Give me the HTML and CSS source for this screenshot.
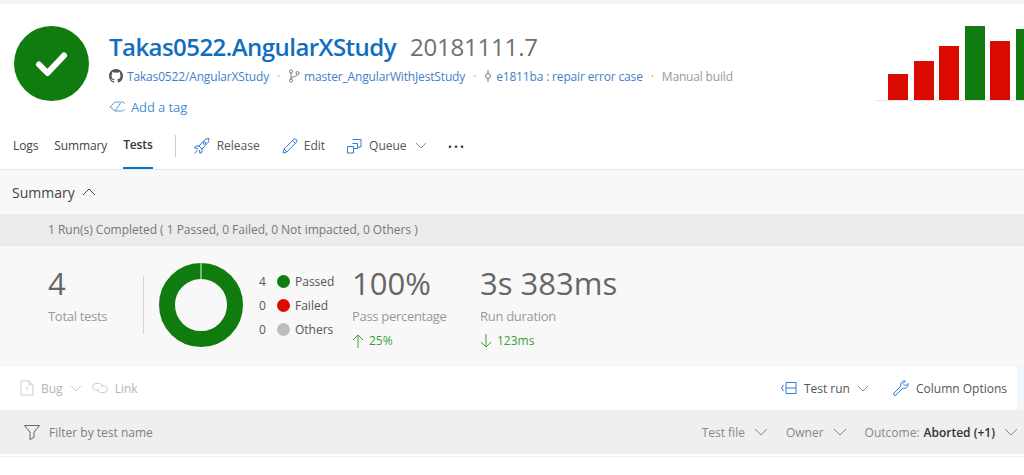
FILE: index.html
```html
<!DOCTYPE html>
<html lang="en">
<head>
  <meta charset="UTF-8">
  <title>Takas0522.AngularXStudy 20181111.7</title>
  <link rel="stylesheet" href="styles.css">
</head>
<body>
<div class="header">
  <div class="status-icon">
    <svg width="34" height="28" viewBox="0 0 34 28"><path d="M4 14.500L12.500 23L29 5.500" fill="none" stroke="#fff" stroke-width="6" stroke-linecap="round" stroke-linejoin="round"/></svg>
  </div>
  <div class="title-block">
    <div class="title"><span class="title-name">Takas0522.AngularXStudy</span><span class="title-num">20181111.7</span></div>
    <div class="meta">
      <svg class="meta-icon" width="14" height="14" viewBox="0 0 16 16"><path fill="#555" d="M8 0C3.580 0 0 3.580 0 8c0 3.540 2.290 6.530 5.470 7.590.4.070.55-.17.55-.38v-1.340c-2.230.48-2.690-1.080-2.690-1.080-.36-.92-.89-1.170-.89-1.170-.73-.5.050-.49.050-.49.800.060 1.220.83 1.220.83.710 1.220 1.870.87 2.330.66.070-.52.280-.87.510-1.070-1.780-.2-3.640-.89-3.640-3.950 0-.87.310-1.590.820-2.150-.080-.2-.360-1.020.080-2.120 0 0 .670-.21 2.200.820a7.600 7.600 0 0 1 4 0c1.530-1.040 2.200-.82 2.200-.82.440 1.100.160 1.920.080 2.120.510.560.820 1.270.820 2.150 0 3.070-1.870 3.750-3.650 3.950.290.250.540.730.540 1.480v2.200c0 .210.150.460.550.380A8 8 0 0 0 16 8c0-4.420-3.580-8-8-8z"/></svg>
      <span class="link">Takas0522/AngularXStudy</span>
      <span class="sep">·</span>
      <svg class="meta-icon" width="12" height="14" viewBox="0 0 12 14"><g fill="none" stroke="#777"><circle cx="3" cy="2.500" r="1.500"/><circle cx="3" cy="11.500" r="1.500"/><circle cx="9.500" cy="4" r="1.500"/><path d="M3 4v6M9.500 5.500C9.500 8 3 7 3 10"/></g></svg>
      <span class="link">master_AngularWithJestStudy</span>
      <span class="sep">·</span>
      <svg class="meta-icon" width="8" height="14" viewBox="0 0 8 14"><g fill="none" stroke="#777"><circle cx="4" cy="7" r="2.500"/><path d="M4 1v3.500M4 9.500V13"/></g></svg>
      <span class="link">e1811ba : repair error case</span>
      <span class="sep">·</span>
      <span class="muted">Manual build</span>
    </div>
    <div class="tag-row">
      <svg width="16" height="14" viewBox="0 0 16 14"><g fill="none" stroke="#5a9bd8"><path d="M1 7l5-5h6.500a3 3 0 0 1 0 9H6z"/><path d="M6 11L11.500 3"/></g></svg>
      <span class="tag-link">Add a tag</span>
    </div>
  </div>
  <div class="history">
    <div class="bar bar-red bar-h1"></div>
    <div class="bar bar-red bar-h2"></div>
    <div class="bar bar-red bar-h3"></div>
    <div class="bar bar-green bar-h4"></div>
    <div class="bar bar-red bar-h5"></div>
    <div class="bar bar-green bar-h6"></div>
  </div>
</div>
<div class="tabs">
  <span class="tab">Logs</span>
  <span class="tab">Summary</span>
  <span class="tab tab-active">Tests</span>
  <span class="tab-divider"></span>
  <span class="action">
    <svg width="18" height="18" viewBox="0 0 18 18"><g fill="none" stroke="#2b7cd3"><path d="M6 9l6-6.500c1-.8 3-1 4-1 0 1-.2 3-1 4L9 12z"/><circle cx="11.500" cy="6" r="1.300"/><path d="M6 9H3L1.500 11 5 11.500M9 12v3l-2 1.500L6.500 13M4.500 13L1.500 16.500"/></g></svg>
    Release
  </span>
  <span class="action">
    <svg width="16" height="16" viewBox="0 0 16 16"><g fill="none" stroke="#2b7cd3"><path d="M1 15l1-4L11.500 1.500a1.500 1.500 0 0 1 2.800 2.800L4.800 14z"/><path d="M2 11l3 3M10.500 2.500l3 3"/></g></svg>
    Edit
  </span>
  <span class="action">
    <svg width="16" height="16" viewBox="0 0 16 16"><g fill="none" stroke="#2b7cd3"><path d="M.5 8.500h6v6.500h-6zM6 2v-.5h8v7.500h-3.500"/><path d="M5.500 5.500h5v5h-4"/></g></svg>
    Queue
    <svg class="chev" width="12" height="7" viewBox="0 0 12 7"><path d="M1 1l5 5 5-5" fill="none" stroke="#888"/></svg>
  </span>
  <span class="more">···</span>
</div>
<div class="summary">
  <div class="summary-head">Summary
    <svg width="14" height="8" viewBox="0 0 14 8"><path d="M1 7l6-6 6 6" fill="none" stroke="#444"/></svg>
  </div>
  <div class="runs">1 Run(s) Completed ( 1 Passed, 0 Failed, 0 Not impacted, 0 Others )</div>
  <div class="stats">
    <div class="stat stat-total">
      <div class="stat-big">4</div>
      <div class="stat-label">Total tests</div>
    </div>
    <div class="stat-divider"></div>
    <svg class="donut" width="84" height="84" viewBox="0 0 84 84">
      <circle cx="42" cy="42" r="34" fill="none" stroke="#107c10" stroke-width="16"/>
      <path d="M42 0v16" stroke="#e6efe6" stroke-width="1"/>
    </svg>
    <div class="legend">
      <div class="legend-row"><span class="legend-num">4</span><span class="legend-dot dot-pass"></span>Passed</div>
      <div class="legend-row"><span class="legend-num">0</span><span class="legend-dot dot-fail"></span>Failed</div>
      <div class="legend-row"><span class="legend-num">0</span><span class="legend-dot dot-other"></span>Others</div>
    </div>
    <div class="stat stat-pass">
      <div class="stat-big">100%</div>
      <div class="stat-label">Pass percentage</div>
      <div class="stat-delta">
        <svg width="12" height="14" viewBox="0 0 12 14"><path d="M6 14V1M1 6l5-5 5 5" fill="none" stroke="#3aa03a"/></svg>
        25%
      </div>
    </div>
    <div class="stat">
      <div class="stat-big">3s 383ms</div>
      <div class="stat-label">Run duration</div>
      <div class="stat-delta">
        <svg width="12" height="14" viewBox="0 0 12 14"><path d="M6 0v13M1 8l5 5 5-5" fill="none" stroke="#3aa03a"/></svg>
        123ms
      </div>
    </div>
  </div>
</div>
<div class="toolbar">
  <span class="tool tool-off">
    <svg width="14" height="16" viewBox="0 0 14 16"><g fill="none" stroke="#ccc"><path d="M1 1h8l4 4v10H1z"/><path d="M9 1v4h4M7 6.500v3.500M7 11.500v1"/></g></svg>
    Bug
    <svg width="12" height="7" viewBox="0 0 12 7"><path d="M1 1l5 5 5-5" fill="none" stroke="#ccc"/></svg>
  </span>
  <span class="tool tool-off">
    <svg width="16" height="12" viewBox="0 0 16 12"><g fill="none" stroke="#ccc"><path d="M6 8.500H4a3.500 3.500 0 0 1 0-7h4a3.500 3.500 0 0 1 2 4"/><path d="M10 3.500h2a3.500 3.500 0 0 1 0 7H8a3.500 3.500 0 0 1-2-4"/></g></svg>
    Link
  </span>
  <span class="toolbar-right">
    <span class="tool">
      <svg width="16" height="12" viewBox="0 0 16 12"><g fill="none" stroke="#2b7cd3"><path d="M5 .5h10v11H5zM5 6h10M2.500 3L.5 6l2 3"/></g></svg>
      Test run
      <svg width="12" height="7" viewBox="0 0 12 7"><path d="M1 1l5 5 5-5" fill="none" stroke="#888"/></svg>
    </span>
    <span class="tool">
      <svg width="16" height="16" viewBox="0 0 16 16"><path d="M1 13l7-7c-1-3 1-5.500 4.500-5L10 3.500l2.500 2.500L15 3.500c.5 3.500-2 5.500-5 4.500l-7 7a1.400 1.400 0 0 1-2-2z" fill="none" stroke="#2b7cd3"/></svg>
      Column Options
    </span>
  </span>
  <span class="toolbar-edge"></span>
</div>
<div class="filter">
  <svg width="16" height="15" viewBox="0 0 16 15"><path d="M.5.500h15L10 7v5.500l-4 2V7z" fill="none" stroke="#666"/></svg>
  <span class="filter-input">Filter by test name</span>
  <span class="filter-right">
    <span class="filter-item">Test file
      <svg width="14" height="8" viewBox="0 0 14 8"><path d="M1 1l6 6 6-6" fill="none" stroke="#888"/></svg>
    </span>
    <span class="filter-item">Owner
      <svg width="14" height="8" viewBox="0 0 14 8"><path d="M1 1l6 6 6-6" fill="none" stroke="#888"/></svg>
    </span>
    <span class="filter-item">Outcome: <b class="filter-val">Aborted (+1)</b>
      <svg width="14" height="8" viewBox="0 0 14 8"><path d="M1 1l6 6 6-6" fill="none" stroke="#888"/></svg>
    </span>
  </span>
</div>
<div class="bottom"></div>
</body>
</html>
```

FILE: styles.css
```css
*{
  margin: 0;
  padding: 0;
  box-sizing: border-box;
}
html, body{
  height: 475px;
  overflow: hidden;
}
body{
  background-color: #fff;
  color: #444;
  font-family: "Open Sans", "Noto Sans", sans-serif;
  font-size: 12px;
  border-top: 4px solid #f4f4f4;
}
.header{
  display: flex;
  height: 118px;
  padding: 22px 0 0 14px;
  overflow: hidden;
}
.status-icon{
  display: flex;
  align-items: center;
  justify-content: center;
  width: 75px;
  height: 75px;
  background-color: #107c10;
  border-radius: 50%;
}
.title-block{
  margin-left: 20px;
  flex: 1;
}
.title{
  display: flex;
  align-items: baseline;
  gap: 14px;
  height: 32px;
  margin-top: 5px;
  line-height: 32px;
  white-space: nowrap;
}
.title-name{
  color: #106ebe;
  font-size: 24px;
  font-weight: 600;
  letter-spacing: -.55px;
}
.title-num{
  color: #6f6f6f;
  font-size: 24px;
  letter-spacing: -.2px;
}
.meta{
  display: flex;
  align-items: center;
  gap: 3px;
  height: 20px;
  margin-top: 3px;
  white-space: nowrap;
  letter-spacing: -.16px;
}
.meta-icon{
  margin-right: 1px;
}
.link{
  color: #3f80c8;
}
.muted{
  color: #999;
}
.sep{
  margin: 0 5px;
  color: #aaa;
}
.tag-row{
  display: flex;
  align-items: center;
  gap: 6px;
  height: 20px;
  margin-top: 11px;
}
.tag-link{
  color: #4a8fd6;
  font-size: 13px;
  letter-spacing: -.1px;
}
.history{
  display: flex;
  align-items: flex-end;
  flex-shrink: 0;
  gap: 5.500px;
  width: 148px;
  height: 75px;
  margin-right: 0;
  padding-left: 12px;
  border-bottom: 1px solid #e4e4e4;
  overflow: hidden;
}
.bar{
  flex-shrink: 0;
  width: 20px;
}
.bar-red{
  background-color: #da0a00;
}
.bar-green{
  background-color: #107c10;
}
.bar-h1{ height: 26px; }
.bar-h2{ height: 39px; }
.bar-h3{ height: 54px; }
.bar-h4{ height: 74px; }
.bar-h5{ height: 59px; }
.bar-h6{ height: 71px; }
.tabs{
  display: flex;
  align-items: center;
  height: 48px;
  padding-left: 13px;
  border-bottom: 1px solid #e6e6e6;
  white-space: nowrap;
}
.tab{
  display: flex;
  align-items: center;
  height: 100%;
  margin-right: 16px;
  letter-spacing: -.12px;
}
.tab-active{
  margin-right: 22px;
  font-weight: 600;
  color: #333;
  border-bottom: 2px solid #0078d4;
}
.tab-divider{
  width: 1px;
  height: 22px;
  margin-right: 17px;
  background-color: #ccc;
}
.action{
  display: flex;
  align-items: center;
  gap: 6px;
  margin-right: 22px;
  color: #555;
}
.chev{
  margin-left: 2px;
}
.more{
  margin-left: -1px;
  font-size: 18px;
  font-weight: 600;
  letter-spacing: 1px;
}
.summary{
  height: 195px;
  background-color: #f8f8f8;
}
.summary-head{
  display: flex;
  align-items: center;
  gap: 7px;
  height: 44px;
  padding-left: 12px;
  color: #444;
  font-size: 14px;
}
.runs{
  height: 32px;
  padding-left: 48px;
  background-color: #ebebeb;
  color: #777;
  line-height: 32px;
  letter-spacing: -.02px;
}
.stats{
  display: flex;
  align-items: flex-start;
  padding: 16px 0 0 48px;
}
.stat-total{
  width: 95px;
}
.stat-big{
  height: 42px;
  color: #666;
  font-size: 31px;
  line-height: 42px;
}
.stat-label{
  margin-top: 3px;
  color: #999;
  font-size: 13px;
  letter-spacing: -.3px;
}
.stat-divider{
  width: 1px;
  height: 58px;
  margin-top: 14px;
  background-color: #d4d4d4;
}
.donut{
  margin-left: 15px;
  margin-top: 1px;
}
.legend{
  margin: 7px 0 0 16px;
  width: 93px;
}
.legend-row{
  display: flex;
  align-items: center;
  height: 24px;
  color: #555;
}
.legend-num{
  width: 18px;
}
.legend-dot{
  width: 13px;
  height: 13px;
  margin-right: 5px;
  border-radius: 50%;
}
.dot-pass{
  background-color: #107c10;
}
.dot-fail{
  background-color: #e00b00;
}
.dot-other{
  background-color: #bdbdbd;
}
.stat-pass{
  width: 128px;
}
.stat-delta{
  display: flex;
  align-items: center;
  gap: 5px;
  margin-top: 7px;
  color: #3aa03a;
}
.toolbar{
  display: flex;
  align-items: center;
  height: 45px;
  padding-left: 20px;
  border-top: 1px solid #f4f4f4;
  white-space: nowrap;
}
.tool{
  display: flex;
  align-items: center;
  gap: 7px;
  margin-right: 10px;
  color: #555;
}
.tool-off{
  color: #b4b4b4;
}
.toolbar-right{
  display: flex;
  align-items: center;
  gap: 14px;
  margin-left: auto;
}
.toolbar-edge{
  width: 7px;
  height: 100%;
  background-color: #f1f6fb;
}
.filter{
  display: flex;
  align-items: center;
  height: 44px;
  padding-left: 24px;
  background-color: #efefef;
  white-space: nowrap;
}
.filter-input{
  margin-left: 9px;
  color: #808080;
}
.filter-right{
  display: flex;
  align-items: center;
  gap: 18px;
  margin-left: auto;
  padding-right: 6px;
  color: #888;
}
.filter-item{
  display: flex;
  align-items: center;
  gap: 4px;
}
.filter-item svg{
  margin-left: 5px;
}
.filter-val{
  color: #333;
  font-weight: 600;
}
.bottom{
  height: 20px;
  margin-top: 2px;
  border-top: 1px solid #eee;
}
```
